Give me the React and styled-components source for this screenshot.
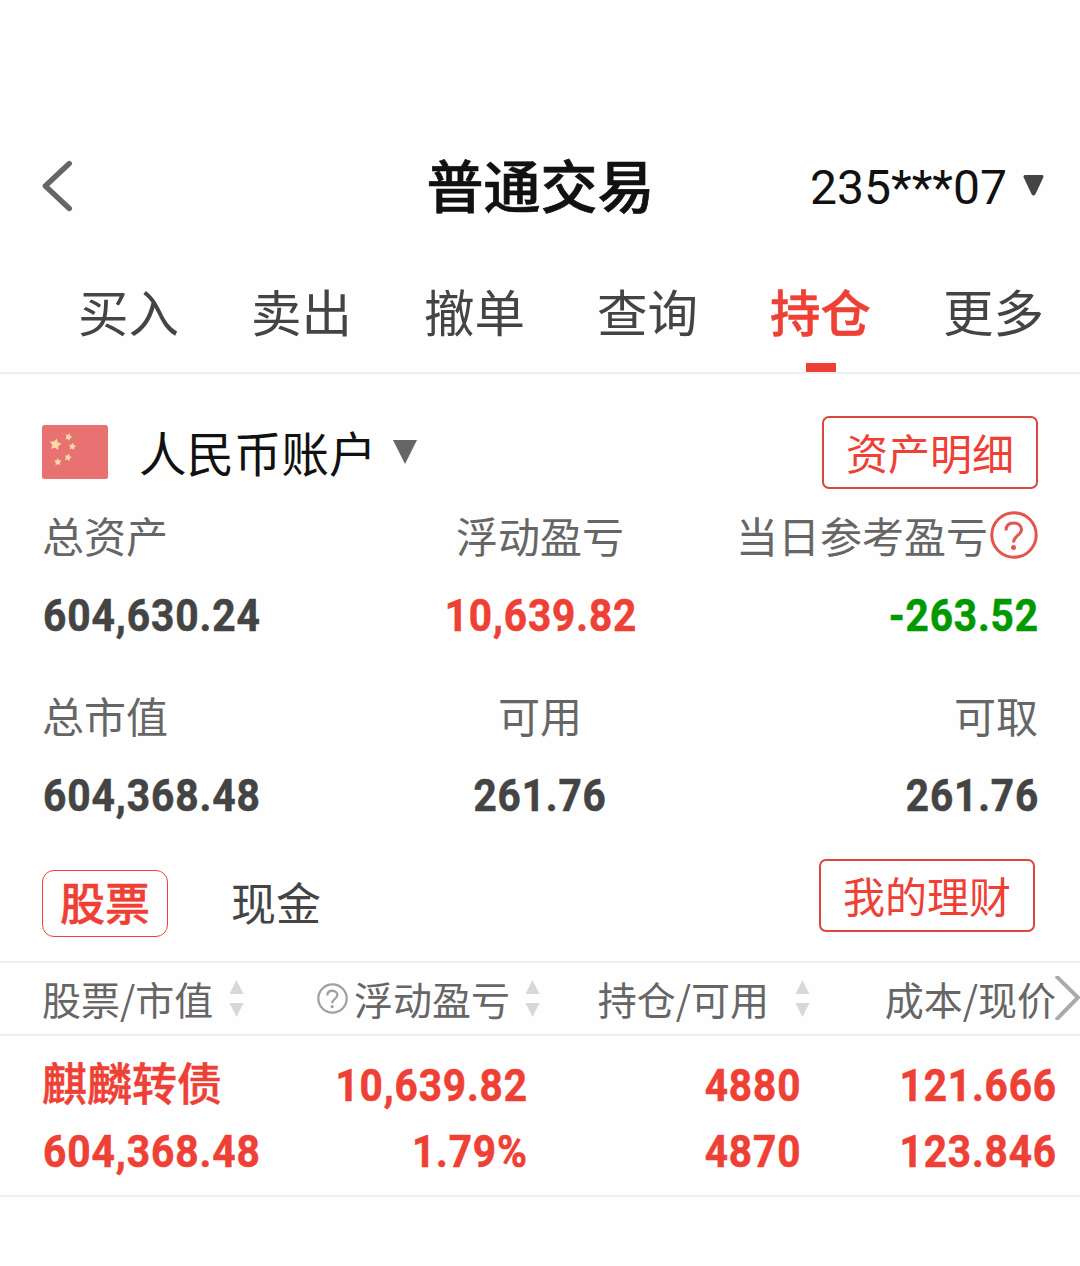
import React from 'react'
import styled, {createGlobalStyle} from 'styled-components'

const GlobalStyle = createGlobalStyle`
  body {
    margin: 0;
    background: #fefefe;
    font-family: "Noto Sans CJK SC", sans-serif;
  }
  * { box-sizing: border-box; }
`;

const RED = '#ee4035';

const Page = styled.div`
  width: 1080px;
  height: 1266px;
  padding-top: 130px;
  overflow: hidden;
  white-space: nowrap;
`;

const Header = styled.header`
  display: grid;
  grid-template-columns: 1fr auto 1fr;
  align-items: center;
  height: 114px;
  padding: 0 36px 2px 41px;
`;
const Title = styled.h1`
  margin: 0 4px 6px 0;
  color: #111;
  font-size: 57px;
  font-weight: 500;
  line-height: 80px;
  -webkit-text-stroke: 0.7px #111;
`;
const AccountPicker = styled.div`
  display: flex;
  justify-content: flex-end;
  align-items: center;
  gap: 16px;
  color: #111;
  font-family: Roboto, sans-serif;
  font-size: 48px;
  line-height: 60px;
`;
const AccountNumber = styled.span`
  padding-top: 3px;
`;

const Tabs = styled.nav`
  display: flex;
  gap: 72px;
  height: 130px;
  padding: 32px 0 0 78px;
  border-bottom: 2px solid #eee;
`;
const Tab = styled.div`
  display: flex;
  flex-direction: column;
  justify-content: space-between;
  align-items: center;
  width: 101px;
  color: ${props => props.$active ? RED : '#444'};
  font-size: 50.5px;
  font-weight: ${props => props.$active ? 500 : 400};
  line-height: 68px;
  -webkit-text-stroke: ${props => props.$active ? '0.5px' : '0'} ${RED};
`;
const TabMark = styled.span`
  width: 30px;
  height: 9px;
  background: ${RED};
`;

const Account = styled.section`
  padding: 42px 42px 0;
`;
const AccountHead = styled.div`
  display: flex;
  align-items: center;
  height: 73px;
`;
const Currency = styled.span`
  margin: 0 16px 2px 31px;
  color: #111;
  font-size: 47.5px;
  line-height: 68px;
  font-weight: 400;
`;
const OutlineButton = styled.button`
  width: 216px;
  height: 73px;
  margin-left: auto;
  padding: 0 0 2px;
  border: 2px solid #dc463c;
  border-radius: 7px;
  background: none;
  color: ${RED};
  font-family: inherit;
  font-size: 42px;
  font-weight: 400;
  line-height: 60px;
`;

const Totals = styled.div`
  display: grid;
  grid-template-columns: repeat(3, 1fr);
  row-gap: 46px;
  margin-top: 22px;
`;
const Total = styled.div`
  display: flex;
  flex-direction: column;
  align-items: ${props => props.$align};
  gap: 26px;
`;
const Label = styled.div`
  display: flex;
  align-items: center;
  gap: 2px;
  height: 48px;
  color: #666;
  font-size: 42px;
  font-weight: 400;
  line-height: 48px;
`;
/* narrow figures, squeezed towards the side the column is aligned to */
const Amount = styled.div`
  height: 60px;
  padding-top: 1px;
  padding-left: ${props => props.$side === 'left' ? 1 : 0}px;
  color: ${props => props.$color || '#444'};
  font-family: Roboto, sans-serif;
  font-size: 45px;
  font-weight: 700;
  line-height: 60px;
  letter-spacing: 1px;
  margin-right: -1px;
  -webkit-text-stroke: 0.6px ${props => props.$color || '#444'};
  transform: scaleX(${props => props.$side === 'left' ? 0.905 : 0.9});
  transform-origin: ${props => props.$side || 'right'};
`;

const Kinds = styled.div`
  display: flex;
  align-items: flex-start;
  height: 138px;
  padding: 34px 45px 0 42px;
  border-bottom: 2px solid #eee;
`;
const Kind = styled.div`
  height: 67px;
  margin-top: 11px;
  margin-right: 45px;
  padding: 0 17px;
  border: 1px solid ${props => props.$active ? RED : 'transparent'};
  border-radius: 12px;
  color: ${props => props.$active ? RED : '#444'};
  font-size: 45px;
  font-weight: ${props => props.$active ? 500 : 400};
  line-height: 62px;
  -webkit-text-stroke: ${props => props.$active ? '0.5px' : '0'} ${RED};
`;

const TableHead = styled.div`
  position: relative;
  display: grid;
  grid-template-columns: 208px 290px 270px 246px;
  align-items: center;
  height: 73px;
  padding-left: 42px;
  border-bottom: 2px solid #eee;
`;
const HeadCell = styled.div`
  display: flex;
  align-items: center;
  justify-content: ${props => props.$first ? 'flex-start' : 'flex-end'};
  color: #666;
  font-size: 39px;
  font-weight: 400;
  line-height: 56px;
`;
const HeadText = styled.span`
  margin: 0 ${props => props.$gap || 0}px 2px 6px;
  &:first-child { margin-left: 0; }
`;
const More = styled.svg`
  position: absolute;
  right: 0;
  top: 13px;
`;
const Row = styled.div`
  display: grid;
  grid-template-columns: 208px 290px 270px 246px;
  height: 161px;
  padding: 19px 0 0 42px;
  border-bottom: 2px solid #eee;
`;
const Cell = styled.div`
  display: flex;
  flex-direction: column;
  align-items: ${props => props.$first ? 'flex-start' : 'flex-end'};
  gap: 6px;
  padding-right: ${props => props.$pad || 0}px;
`;
const StockName = styled.div`
  height: 60px;
  color: ${RED};
  font-size: 45px;
  font-weight: 500;
  line-height: 53px;
  -webkit-text-stroke: 0.5px ${RED};
`;

const BackIcon = () => (
    <svg width="32" height="54" viewBox="0 0 32 54" fill="none" stroke="#666" strokeWidth="5.4" strokeLinecap="round" strokeLinejoin="round">
        <path d="M28.3 4.500 4.300 27 28.300 49.500" />
    </svg>
)

const SmallCaret = () => (
    <svg width="21" height="22" viewBox="0 0 21 22">
        <path d="M2 0h17q2 0 1.300 2.500L12.500 19q-2 3-4 0L.7 2.500Q0 0 2 0Z" fill="#444" />
    </svg>
)

const Caret = () => (
    <svg width="24" height="26" viewBox="0 0 24 26">
        <path d="M0 0h24L12 24Z" fill="#666" />
    </svg>
)

const star = (cx, cy, r, turn) => {
    const points = []
    for (let i = 0; i < 10; i++) {
        const size = i % 2 ? r * 0.52 : r
        const angle = (turn + i * 36 - 90) * Math.PI / 180
        points.push(`${(cx + size * Math.cos(angle)).toFixed(2)},${(cy + size * Math.sin(angle)).toFixed(2)}`)
    }
    return points.join(' ')
}

const Flag = () => (
    <svg width="66" height="56" viewBox="0 0 66 56">
        <rect width="66" height="54" rx="2.500" fill="#e87272" />
        <g fill="#fbd9a5">
            <polygon points={star(13.5, 19.5, 6.2, 10)} />
            <polygon points={star(26.5, 12, 3.9, 20)} />
            <polygon points={star(30.3, 21.5, 3.9, 10)} />
            <polygon points={star(26, 32.5, 3.9, 15)} />
            <polygon points={star(15.8, 37, 3.9, 0)} />
        </g>
    </svg>
)

const Help = ({size, color, line}) => (
    <svg width={size} height={size} viewBox="0 0 48 48" fill="none" stroke={color} strokeWidth={line}>
        <circle cx="24" cy="24" r={24 - line / 2 - 0.3} />
        <path d="M16 19.500C16 14.500 19 12 23.700 12C28.500 12 31.500 15 31.500 18.500C31.500 24.500 23.500 24.500 23.500 31.500" />
        <circle cx="23.500" cy="36.500" r="2.500" fill={color} stroke="none" />
    </svg>
)

const Sort = () => (
    <svg width="15" height="38" viewBox="0 0 15 38" fill="#d8d8d8">
        <path d="M7.500 0 14.500 14H.5ZM.5 23h14L7.500 37Z" />
    </svg>
)

const tabs = ['买入', '卖出', '撤单', '查询', '持仓', '更多'];

const totals = [
    {label: '总资产', value: '604,630.24', align: 'flex-start', side: 'left'},
    {label: '浮动盈亏', value: '10,639.82', align: 'center', side: 'center', color: RED},
    {label: '当日参考盈亏', value: '-263.52', align: 'flex-end', side: 'right', color: '#090', help: true},
    {label: '总市值', value: '604,368.48', align: 'flex-start', side: 'left'},
    {label: '可用', value: '261.76', align: 'center', side: 'center'},
    {label: '可取', value: '261.76', align: 'flex-end', side: 'right'},
];

const App = () => {
    return (
        <Page>
            <GlobalStyle />
            <Header>
                <BackIcon />
                <Title>普通交易</Title>
                <AccountPicker>
                    <AccountNumber>235***07</AccountNumber>
                    <SmallCaret />
                </AccountPicker>
            </Header>

            <Tabs>
                {tabs.map( (tab) => {
                    const active = tab === '持仓'
                    return (
                        <Tab key={tab} $active={active}>
                            {tab}
                            {active && <TabMark />}
                        </Tab>
                    )
                } )}
            </Tabs>

            <Account>
                <AccountHead>
                    <Flag />
                    <Currency>人民币账户</Currency>
                    <Caret />
                    <OutlineButton>资产明细</OutlineButton>
                </AccountHead>
                <Totals>
                    {totals.map( (total) => {
                        return (
                            <Total key={total.label} $align={total.align}>
                                <Label>
                                    {total.label}
                                    {total.help && <Help size={48} color="#e2564c" line={3} />}
                                </Label>
                                <Amount $color={total.color} $side={total.side}>{total.value}</Amount>
                            </Total>
                        )
                    } )}
                </Totals>
            </Account>

            <Kinds>
                <Kind $active>股票</Kind>
                <Kind>现金</Kind>
                <OutlineButton>我的理财</OutlineButton>
            </Kinds>

            <TableHead>
                <HeadCell $first><HeadText $gap={16}>股票/市值</HeadText><Sort /></HeadCell>
                <HeadCell>
                    <Help size={31} color="#a0a0a0" line={3.5} />
                    <HeadText $gap={15}>浮动盈亏</HeadText>
                    <Sort />
                </HeadCell>
                <HeadCell><HeadText $gap={26}>持仓/可用</HeadText><Sort /></HeadCell>
                <HeadCell><HeadText>成本/现价</HeadText></HeadCell>
                <More width="25" height="44" viewBox="0 0 25 44" fill="none" stroke="#aaa" strokeWidth="4">
                    <path d="M1 0 23 21.500 1 44" />
                </More>
            </TableHead>
            <Row>
                <Cell $first>
                    <StockName>麒麟转债</StockName>
                    <Amount $color={RED} $side="left">604,368.48</Amount>
                </Cell>
                <Cell $pad={13}>
                    <Amount $color={RED}>10,639.82</Amount>
                    <Amount $color={RED}>1.79%</Amount>
                </Cell>
                <Cell $pad={10}>
                    <Amount $color={RED}>4880</Amount>
                    <Amount $color={RED}>4870</Amount>
                </Cell>
                <Cell>
                    <Amount $color={RED}>121.666</Amount>
                    <Amount $color={RED}>123.846</Amount>
                </Cell>
            </Row>
        </Page>
    )
}

export default App;
